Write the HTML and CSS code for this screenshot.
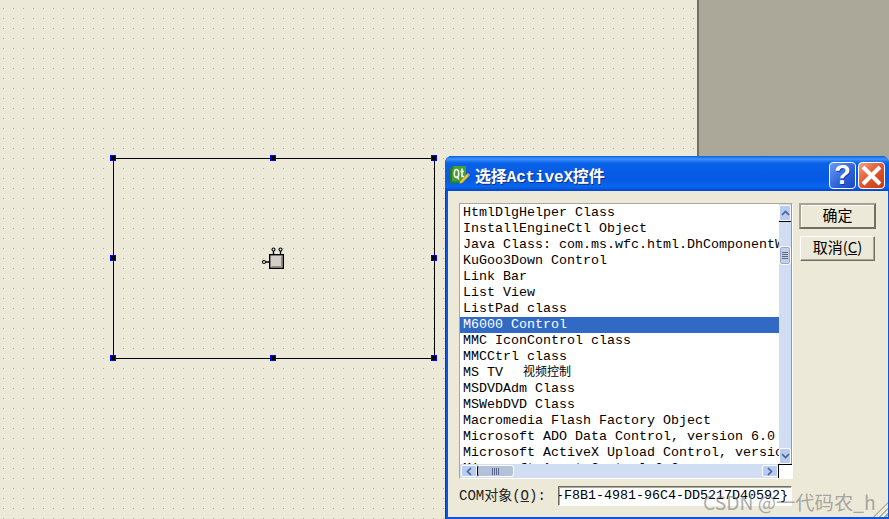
FILE: index.html
```html
<!DOCTYPE html>
<html>
<head>
<meta charset="utf-8">
<title>选择ActiveX控件</title>
<link rel="stylesheet" href="styles.css">
</head>
<body>
<div class="desktop">
  <div class="form">
    <div class="widget">
      <i class="grip g1"></i><i class="grip g2"></i><i class="grip g3"></i><i class="grip g4"></i>
      <i class="grip g5"></i><i class="grip g6"></i><i class="grip g7"></i><i class="grip g8"></i>
      <svg class="plug" width="24" height="24" viewBox="0 0 24 24">
        <rect x="7.700" y="8.700" width="13.600" height="13.600" fill="#d4d0c8" stroke="#000" stroke-width="1.400"/>
        <path d="M9.500 20.500H19.500V10.500" fill="none" stroke="#8f8c84"/>
        <path d="M11.500 5V8M18.500 5V8M3.500 16H7" stroke="#000" stroke-width="1.300"/>
        <circle cx="11.500" cy="3.500" r="1.500" fill="#fff" stroke="#000" stroke-width="1.100"/>
        <circle cx="18.500" cy="3.500" r="1.500" fill="#fff" stroke="#000" stroke-width="1.100"/>
        <circle cx="2" cy="16" r="1.500" fill="#fff" stroke="#000" stroke-width="1.100"/>
      </svg>
    </div>
  </div>
  <div class="workspace"></div>
  <section class="dialog">
    <header class="titlebar">
      <svg class="qt" width="20" height="18" viewBox="0 0 20 18">
        <path d="M3 0H16V12L12 17H0V3Z" fill="#45a02f"/>
        <path d="M0 3V17H12L11 15.500H2V3.500L3.500 1L3 0Z" fill="#2f7a22"/>
        <path d="M6.500 3.500C4.800 3.500 4.300 5 4.300 7.500S4.800 11.500 6.500 11.500 8.700 10 8.700 7.500 8.200 3.500 6.500 3.500ZM7 10L9 13.500M12 2.500V10.500H14M10.500 5.500H14" fill="none" stroke="#fff" stroke-width="1.500"/>
        <path d="M10 15.500L17 8L19 10L12 17L9.500 17.500Z" fill="#f4c51e"/>
        <path d="M17 8L18 7L20 9L19 10Z" fill="#ee9a9a"/>
      </svg>
      <span class="title">选择ActiveX控件</span>
      <button class="cap help">?</button>
      <button class="cap close"><svg width="23" height="23" viewBox="0 0 23 23"><path d="M3 3L20 20M20 3L3 20" stroke="#fff" stroke-width="4"/></svg></button>
    </header>
    <div class="client">
      <div class="top">
        <div class="listbox">
          <div class="viewport">
            <div class="row">HtmlDlgHelper Class</div>
            <div class="row">InstallEngineCtl Object</div>
            <div class="row">Java Class: com.ms.wfc.html.DhComponentWrapper</div>
            <div class="row">KuGoo3Down Control</div>
            <div class="row">Link Bar</div>
            <div class="row">List View</div>
            <div class="row">ListPad class</div>
            <div class="row sel">M6000 Control</div>
            <div class="row">MMC IconControl class</div>
            <div class="row">MMCCtrl class</div>
            <div class="row">MS TV  <span class="cjk">视频控制</span></div>
            <div class="row">MSDVDAdm Class</div>
            <div class="row">MSWebDVD Class</div>
            <div class="row">Macromedia Flash Factory Object</div>
            <div class="row">Microsoft ADO Data Control, version 6.0</div>
            <div class="row">Microsoft ActiveX Upload Control, version</div>
            <div class="row">Microsoft Agent Control 2.0</div>
          </div>
          <div class="vbar">
            <span class="sbtn"><svg width="9" height="6" viewBox="0 0 9 6"><path d="M1 5L4.500 1.500L8 5" fill="none" stroke="#4d6185" stroke-width="1.600"/></svg></span>
            <span class="vtrack"><span class="vthumb"><b></b><b></b><b></b><b></b></span></span>
            <span class="sbtn"><svg width="9" height="6" viewBox="0 0 9 6"><path d="M1 1L4.500 4.500L8 1" fill="none" stroke="#4d6185" stroke-width="1.600"/></svg></span>
          </div>
          <div class="hbar">
            <span class="hbtn"><svg width="6" height="9" viewBox="0 0 6 9"><path d="M5 1L1.500 4.500L5 8" fill="none" stroke="#4d6185" stroke-width="1.600"/></svg></span>
            <span class="hthumb"><b></b><b></b><b></b><b></b></span>
            <span class="hfill"></span>
            <span class="hbtn"><svg width="6" height="9" viewBox="0 0 6 9"><path d="M1 1L4.500 4.500L1 8" fill="none" stroke="#4d6185" stroke-width="1.600"/></svg></span>
          </div>
          <div class="corner"></div>
        </div>
        <div class="actions">
          <button class="btn default">确定</button>
          <button class="btn">取消(<u>C</u>)</button>
        </div>
      </div>
      <div class="combo">
        <label class="lbl">COM对象(<u>O</u>):</label>
        <div class="field">-F8B1-4981-96C4-DD5217D40592}</div>
      </div>
      <i class="sizegrip"></i>
    </div>
  </section>
  <div class="mark">CSDN @一代码农_h</div>
</div>
</body>
</html>
```
FILE: styles.css
```css
* { box-sizing: border-box; }
html, body { margin: 0; padding: 0; }
body { width: 889px; height: 519px; overflow: hidden; background: #ece9d8; }
.desktop { position: relative; width: 889px; height: 519px; overflow: hidden; display: flex; }
.form {
  width: 699px; height: 519px; flex: none; position: relative;
  background-color: #ece9d8;
  background-image: conic-gradient(at 1px 1px, transparent 270deg, #a8a699 270deg);
  background-size: 10px 10px;
  background-position: 3px 8px;
  border-right: 2px solid #716f64;
}
.workspace { flex: 1; background: #aca899; }
.widget { position: absolute; left: 113px; top: 158px; width: 322px; height: 201px; border: 1px solid #000; }
.grip { position: absolute; width: 6px; height: 6px; background: #000; border: 1px solid #0000ff; }
.g1 { left: -4px; top: -4px; } .g2 { left: 156px; top: -4px; } .g3 { left: 317px; top: -4px; }
.g4 { left: -4px; top: 96px; } .g5 { left: 317px; top: 96px; }
.g6 { left: -4px; top: 196px; } .g7 { left: 156px; top: 196px; } .g8 { left: 317px; top: 196px; }
.plug { position: absolute; left: 148px; top: 87px; }

.dialog {
  position: absolute; left: 445px; top: 156px; width: 444px; height: 363px;
  background: #0a55e5; border-radius: 7px 7px 0 0;
  display: flex; flex-direction: column;
  padding: 0 1px 2px 3px;
  box-shadow: inset 1px 0 0 #0831d9;
}
.titlebar {
  height: 35px; flex: none; margin: 0 -1px 0 -3px; padding: 0 4px 0 5px;
  display: flex; align-items: center;
  border-radius: 7px 7px 0 0;
  background: linear-gradient(#0a5ce0 0, #3f93ff 3px, #0a62e8 7px, #0558e2 22px, #0a66ee 31px, #0443c8 35px);
}
.qt { flex: none; margin-right: 5px; margin-top: 2px; }
.title {
  flex: 1; color: #fff; font: bold 16px "Liberation Mono", "Noto Sans CJK SC", monospace;
  letter-spacing: -0.15px;
  text-shadow: 1px 1px 0 #0f2f8c; white-space: nowrap; margin-top: 2px;
}
.cap {
  flex: none; width: 27px; height: 27px; padding: 0; margin-left: 2px; margin-top: 4px;
  border: 1px solid #fff; border-radius: 4px; display: flex; align-items: center; justify-content: center;
}
.help { background: linear-gradient(135deg, #6f9bf2, #2a5fdc 60%, #1c46c4); color: #fff; font: bold 27px/25px "Liberation Sans", sans-serif; text-shadow: 1px 1px 0 #123aa8; }
.close { background: linear-gradient(135deg, #f0a284, #e2552c 50%, #c93a10); }

.client { flex: 1; position: relative; background: #ece9d8; padding: 12px 0 0 11px; display: flex; flex-direction: column; min-height: 0; }
.top { display: flex; align-items: flex-start; }
.listbox {
  width: 334px; height: 276px; flex: none;
  display: grid; grid-template-columns: 319px 13px; grid-template-rows: 260px 14px;
  border: 1px solid; border-color: #aca899 #fff #fff #aca899; background: #fff;
}
.viewport { overflow: hidden; padding-top: 1px; background: #fff; }
.row {
  height: 16px; font: 13.33px/16px "Liberation Mono", "Noto Sans CJK SC", monospace;
  color: #000; white-space: pre; padding-left: 3px;
}
.cjk { font-size: 12px; margin-left: 4px; }
.sel { background: #316ac5; color: #fff; }
.vbar { display: flex; flex-direction: column; background: #d1ddf3; border-right: 1px solid #7f9db9; padding-top: 1px; }
.sbtn { height: 16px; flex: none; background: #b7cbf5; border: 1px solid #fff; border-radius: 2px; display: flex; align-items: center; justify-content: center; }
.vtrack { flex: 1; border-top: 1px solid #000; padding-top: 24px; }
.vthumb { display: flex; flex-direction: column; gap: 1px; align-items: center; justify-content: center; width: 12px; height: 19px; background: #c3d0e8; border: 1px solid #fff; border-radius: 3px; box-shadow: inset 0 0 0 1px #98aacb; }
.vthumb b { display: block; width: 6px; height: 1px; background: #59698a; }
.hbar { display: flex; background: #d1ddf3; border-right: 1px solid #000; padding: 1px 0 1px 1px; }
.hbtn { width: 16px; flex: none; background: #b7cbf5; border: 1px solid #fff; border-radius: 2px; display: flex; align-items: center; justify-content: center; }
.hthumb { width: 37px; flex: none; display: flex; gap: 1px; align-items: center; justify-content: center; background: #b4c1d8; border: 1px solid #fff; border-left: 1px solid #000; border-radius: 3px; }
.hthumb b { display: block; width: 1px; height: 7px; background: #59698a; }
.hfill { flex: 1; }
.corner { background: #fff; border-top: 1px solid #000; }
.actions { display: flex; flex-direction: column; align-items: center; gap: 7px; margin-left: 6px; }
.btn {
  width: 75px; height: 25px; padding: 0 0 4px; background: #ece9d8; color: #000;
  font: 15px/20px "Noto Sans CJK SC", "Liberation Mono", monospace;
  border: 1px solid; border-color: #fff #716f64 #716f64 #fff;
  box-shadow: inset -1px -1px 0 #aca899;
}
.btn.default { width: 77px; height: 26px; border: 2px solid; border-color: #a5a394 #716f64 #716f64 #a5a394; box-shadow: inset 1px 1px 0 #fff; }
.combo { display: flex; align-items: flex-start; margin-top: 7px; }
.lbl { width: 99px; flex: none; font: 14px/20px "Liberation Mono", "Noto Sans CJK SC", monospace; color: #222; }
.field {
  width: 234px; height: 20px; background: #fff; overflow: hidden; white-space: nowrap;
  font: 13.33px/18px "Liberation Mono", monospace;
  border: 1px solid; border-color: #716f64 #fff #fff #716f64;
  box-shadow: inset 1px 1px 0 #aca899;
  text-indent: -3px;
}
.sizegrip {
  position: absolute; right: 0; bottom: 0; width: 15px; height: 15px;
  background: repeating-linear-gradient(135deg, transparent 0, transparent 1.500px, #fff 1.500px, #fff 2.200px, #aca899 2.200px, #aca899 4px);
  clip-path: polygon(100% 0, 100% 100%, 0 100%);
}
.mark { position: absolute; left: 703px; top: 488px; color: rgba(120,120,120,.62); font: 19.300px "Noto Sans CJK SC", "Liberation Sans", sans-serif; white-space: nowrap; }
```
